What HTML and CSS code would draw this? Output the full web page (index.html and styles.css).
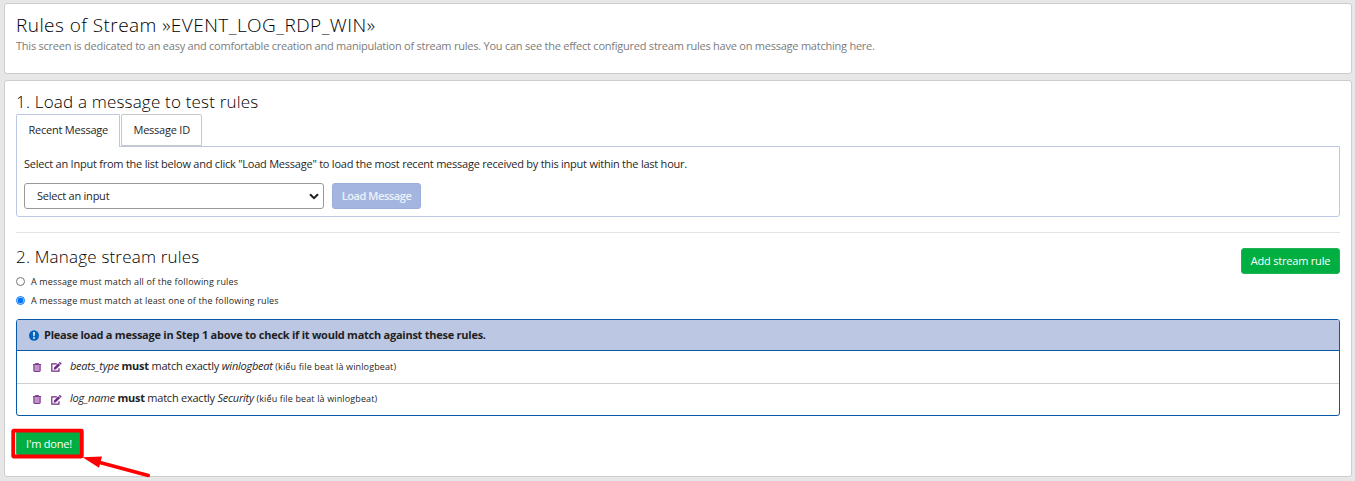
FILE: index.html
```html
<!DOCTYPE html>
<html lang="en">
<head>
<meta charset="utf-8">
<title>Rules of Stream</title>
<link rel="stylesheet" href="styles.css">
</head>
<body>
<header class="panel page-header">
  <h1>Rules of Stream »EVENT_LOG_RDP_WIN»</h1>
  <p class="lead">This screen is dedicated to an easy and comfortable creation and manipulation of stream rules. You can see the effect configured stream rules have on message matching here.</p>
</header>
<main class="panel content">
  <h2>1. Load a message to test rules</h2>
  <nav class="tabs">
    <a class="tab active">Recent Message</a>
    <a class="tab">Message ID</a>
  </nav>
  <section class="tab-pane">
    <p class="hint">Select an Input from the list below and click "Load Message" to load the most recent message received by this input within the last hour.</p>
    <div class="loader">
      <div class="select"><span>Select an input</span>
        <svg width="10" height="7" viewBox="0 0 10 7"><path d="M1 1.2 5 5.2 9 1.2" fill="none" stroke="#1f1f1f" stroke-width="2"/></svg>
      </div>
      <button class="btn btn-load">Load Message</button>
    </div>
  </section>
  <hr>
  <div class="manage">
    <h2>2. Manage stream rules</h2>
    <button class="btn btn-success btn-add">Add stream rule</button>
  </div>
  <div class="radios">
    <label><i class="radio"></i><span>A message must match all of the following rules</span></label>
    <label><i class="radio checked"></i><span>A message must match at least one of the following rules</span></label>
  </div>
  <section class="rules">
    <div class="rules-head">
      <svg width="10" height="11" viewBox="0 0 10 11"><ellipse cx="5" cy="5.5" rx="5" ry="5.3" fill="#0063be"/><path d="M4 2h2l-.3 4.3H4.3z" fill="#e5ecf8"/><circle cx="5" cy="8" r="1" fill="#e5ecf8"/></svg>
      <b>Please load a message in Step 1 above to check if it would match against these rules.</b>
    </div>
    <div class="rule">
      <svg class="trash" width="8" height="9" viewBox="0 0 8 9"><path d="M.5 2h7v6.5h-7z" fill="#bd93c8"/><path d="M0 1.5h8M2.5 1V.5h3V1M.9 2v6q0 .5.5.5h5.2q.5 0 .5-.5V2" fill="none" stroke="#702785" stroke-width=".9"/></svg>
      <svg class="edit" width="11" height="10" viewBox="0 0 11 10"><path d="M5.8 1.9H.8v7.2h7.2V6.3" fill="none" stroke="#702785" stroke-width="1.2"/><path d="M3 5.5 7.3 1.2l1.9 1.9-4.3 4.2L2.7 7.7zM7.8.8 8.4.2q.4-.4.8 0l1.2 1.1q.3.4 0 .8l-.7.6z" fill="#702785"/></svg>
      <p><em>beats_type</em> <strong>must</strong> match exactly <em>winlogbeat</em> <small>(kiểu file beat là winlogbeat)</small></p>
    </div>
    <div class="rule">
      <svg class="trash" width="8" height="9" viewBox="0 0 8 9"><path d="M.5 2h7v6.5h-7z" fill="#bd93c8"/><path d="M0 1.5h8M2.5 1V.5h3V1M.9 2v6q0 .5.5.5h5.2q.5 0 .5-.5V2" fill="none" stroke="#702785" stroke-width=".9"/></svg>
      <svg class="edit" width="11" height="10" viewBox="0 0 11 10"><path d="M5.8 1.9H.8v7.2h7.2V6.3" fill="none" stroke="#702785" stroke-width="1.2"/><path d="M3 5.5 7.3 1.2l1.9 1.9-4.3 4.2L2.7 7.7zM7.8.8 8.4.2q.4-.4.8 0l1.2 1.1q.3.4 0 .8l-.7.6z" fill="#702785"/></svg>
      <p><em>log_name</em> <strong>must</strong> match exactly <em>Security</em> <small>(kiểu file beat là winlogbeat)</small></p>
    </div>
  </section>
  <div class="finish">
    <button class="btn btn-success btn-done">I'm done!</button>
    <svg class="annotation" width="144" height="52" viewBox="0 0 144 52"><rect x="3.2" y="2.7" width="68.6" height="25.8" rx=".5" fill="none" stroke="#fe0000" stroke-width="3.8"/><path d="M88 34 138.3 47.5" stroke="#fe0000" stroke-width="3.6" stroke-linecap="round"/><path d="M72.5 29.2 92 28.6 89 39.7z" fill="#fe0000"/></svg>
  </div>
</main>
</body>
</html>
```
FILE: styles.css
```css
* { box-sizing: border-box; }
body {
  margin: 0;
  padding: 3px 3px 4px 4px;
  height: 481px;
  overflow: hidden;
  background: #e7e7e7;
  color: #1f1f1f;
  font: 11px/16px "Open Sans", "Noto Sans", sans-serif;
  letter-spacing: -.235px;
}
h1, h2, p { margin: 0; white-space: nowrap; }
h1, h2 { font-weight: 300; color: #000; }
h1 { font-size: 19px; line-height: 22px; letter-spacing: .44px; }
h2 { font-size: 17px; line-height: 20px; letter-spacing: .19px; }
svg { display: block; flex: none; }
.panel {
  background: #fff;
  border: 1px solid #cdcdcd;
  border-radius: 3px;
  padding: 0 11px;
}
.page-header { height: 71px; margin-bottom: 6px; padding-top: 10px; }
.lead { color: #7c7c7c; line-height: 18px; margin-top: 1px; }
.content { height: 397px; padding-top: 11px; }
.tabs { display: flex; gap: 1px; height: 32px; margin-top: 2px; }
.tab {
  height: 32px;
  padding: 7px 11px 7px 11.5px;
  border: 1px solid #c8c8c8;
  border-radius: 2px 2px 0 0;
  white-space: nowrap;
  width: 81px;
}
.tab.active {
  width: 104px;
  height: 33px;
  background: #fff;
  border-color: #bcc7e4;
  border-bottom: 0;
  z-index: 1;
}
.tab-pane {
  height: 71px;
  padding: 9px 7px 0;
  border: 1px solid #bcc7e4;
  border-radius: 0 0 3px 3px;
}
.loader { display: flex; gap: 8px; margin-top: 11px; }
.select {
  width: 300px;
  height: 26px;
  padding: 0 4px 0 12px;
  display: flex;
  align-items: center;
  justify-content: space-between;
  border: 1px solid #999;
  border-radius: 3px;
}
.btn {
  height: 26px;
  padding: 0;
  border: 1px solid;
  border-radius: 3px;
  color: #fff;
  font: 11px/16px "Open Sans", sans-serif;
  letter-spacing: -.2px;
  white-space: nowrap;
}
.btn-load { width: 89px; background: #a4b6df; border-color: #9badda; color: #edf1fa; font-weight: 600; letter-spacing: -.42px; }
.btn-success { background: #00ae42; border-color: #21b258; }
hr { height: 1px; margin: 15px 0 14px; border: 0; background: #e3e3e3; }
.manage { display: flex; justify-content: space-between; height: 26px; }
.btn-add { width: 99px; margin-top: 1px; }
.radios { margin-top: -1px; font-size: 9px; letter-spacing: .16px; }
.radios label { display: flex; align-items: center; gap: 6px; height: 19px; white-space: nowrap; }
.radio { width: 9px; height: 9px; border: 1px solid #767676; border-radius: 50%; }
.radio.checked { border-color: #0075ff; background: radial-gradient(#0075ff 0 2.7px, #fff 3.3px); }
.rules {
  height: 97px;
  margin-top: 9px;
  border: 1px solid #0a58a8;
  border-radius: 3px;
  overflow: hidden;
}
.rules-head {
  display: flex;
  align-items: center;
  gap: 5px;
  height: 31px;
  padding-left: 12px;
  background: #bcc7e4;
  border-bottom: 1px solid #0a58a8;
  letter-spacing: -.25px;
  white-space: nowrap;
}
.rule { display: flex; align-items: center; height: 32px; padding-left: 16px; }
.rule + .rule { border-top: 1px solid #cfcfcf; }
.rule p { padding-bottom: 2px; }
.edit { margin: 0 8px 0 10px; }
.rule small { font-size: 9px; letter-spacing: .13px; }
.finish { position: relative; margin-top: 14px; }
.btn-done { width: 65px; display: block; padding: 2px 0 0 1px; }
.annotation { position: absolute; left: -6px; top: -2px; }
```
